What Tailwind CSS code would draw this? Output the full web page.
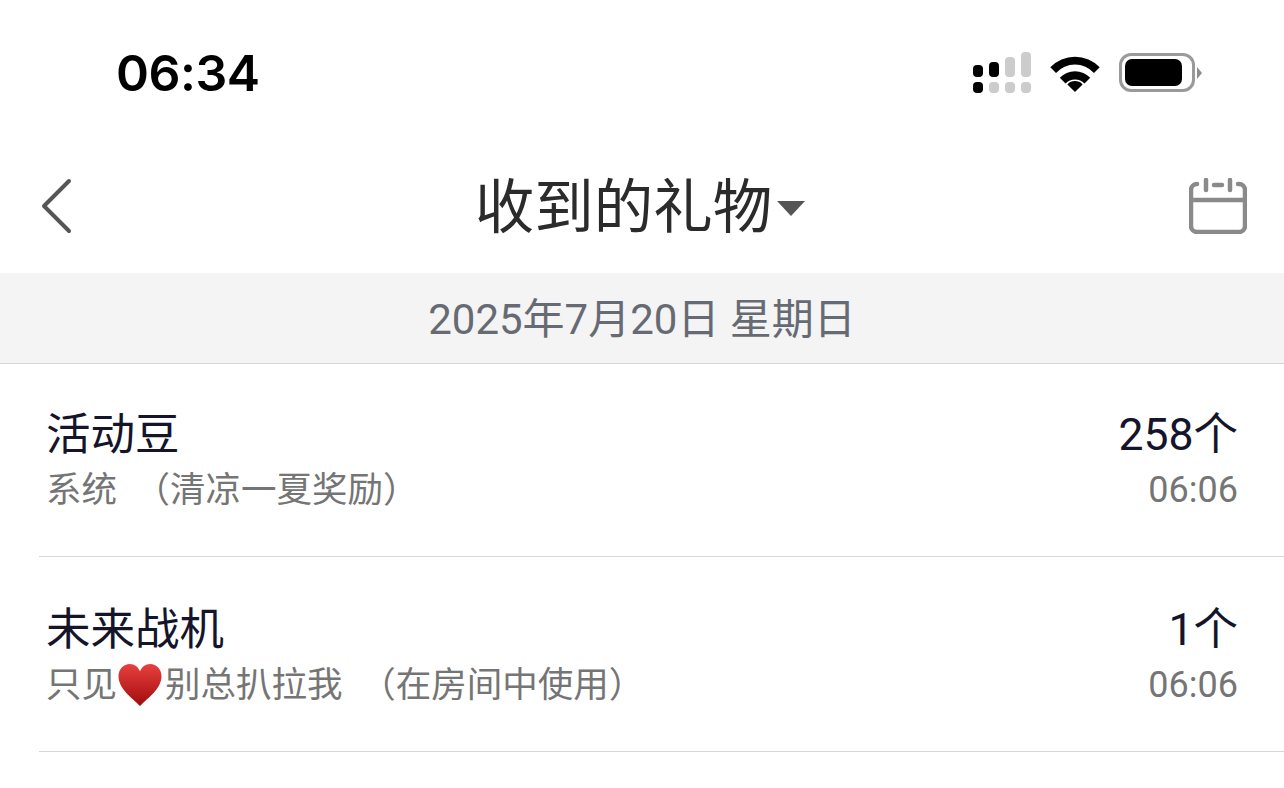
<!DOCTYPE html>
<html lang="zh">
<head>
  <meta charset="UTF-8" />
  <title>收到的礼物</title>
  <script src="https://cdn.jsdelivr.net/npm/@tailwindcss/browser@4"></script>
</head>
<body class="bg-white w-[1284px] h-[788px] overflow-hidden font-['Roboto','Noto_Sans_CJK_SC',sans-serif]">
  <!-- status bar -->
  <div class="h-[145px] flex items-start justify-between pl-[116px] pr-[82px] pt-[43px]">
    <span class="font-['Inter'] text-[50px] leading-[60px] font-semibold text-black tracking-[-0.5px]">06:34</span>
    <div class="flex items-start gap-[19px] pt-[9px]">
      <svg width="58" height="41" viewBox="0 0 58 41">
        <rect x="0" y="13" width="10" height="12" rx="4" fill="#000"/>
        <rect x="16" y="10" width="10" height="15" rx="4" fill="#000"/>
        <rect x="32" y="5" width="10" height="20" rx="4" fill="#ccc"/>
        <rect x="48" y="0" width="10" height="25" rx="4" fill="#ccc"/>
        <rect x="0" y="30" width="10" height="11" rx="4" fill="#000"/>
        <rect x="16" y="30" width="10" height="11" rx="4" fill="#ccc"/>
        <rect x="32" y="30" width="10" height="11" rx="4" fill="#ccc"/>
        <rect x="48" y="30" width="10" height="11" rx="4" fill="#ccc"/>
      </svg>
      <svg class="mt-[2px]" width="50" height="38" viewBox="0 0 52 40">
        <path d="M0 14 A36 36 0 0 1 52 14 L46 20 A27 27 0 0 0 6 20 Z" fill="#000"/>
        <path d="M10 25 A22 22 0 0 1 42 25 L36 31 A14 14 0 0 0 16 31 Z" fill="#000"/>
        <path d="M18 32 A11 11 0 0 1 34 32 L26 40 Z" fill="#000"/>
      </svg>
      <div class="flex items-center mt-[1px]">
        <div class="w-[76px] h-[39px] rounded-[12px] border-[3px] border-[#9a9a9a] p-[3px]">
          <div class="w-[57px] h-full rounded-[7px] bg-black"></div>
        </div>
        <div class="w-0 h-0 ml-[2px] border-l-[5px] border-y-[6px] border-l-[#8e8e8e] border-y-transparent"></div>
      </div>
    </div>
  </div>

  <!-- nav -->
  <div class="h-[128px] flex items-start justify-between pl-[41px] pr-[37px] pt-[33px]">
    <svg width="32" height="56" viewBox="0 0 32 56" fill="none" stroke="#555" stroke-width="4" stroke-linecap="round" stroke-linejoin="round">
      <path d="M28 3 L3 28 L28 53"/>
    </svg>
    <div class="flex items-center ml-[18px] -mt-[6px]">
      <span class="text-[59.5px] leading-[72px] text-[#2b2b2b]">收到的礼物</span>
      <span class="ml-[5px] w-0 h-0 border-l-[14px] border-r-[14px] border-t-[15px] border-l-transparent border-r-transparent border-t-[#555]"></span>
    </div>
    <svg width="58" height="56" viewBox="0 0 58 56" fill="none" stroke="#8a8a8a" stroke-width="4.5" stroke-linecap="round">
      <path d="M8 6 a6 6 0 0 0 -6 6 v36 a6 6 0 0 0 6 6 h42 a6 6 0 0 0 6 -6 v-36 a6 6 0 0 0 -6 -6 h-1"/>
      <path d="M2 22 H56"/>
      <path d="M17 2 V12 M41 2 V12 M25 7 H33"/>
    </svg>
  </div>

  <!-- date -->
  <div class="h-[91px] bg-[#f4f4f4] border-b border-[#d6d6d6] flex items-center justify-center pt-[3px]">
    <span class="text-[42px] leading-[52px] text-[#666b73]">2025年7月20日 星期日</span>
  </div>

  <!-- rows -->
  <div class="ml-[39px]">
    <div class="h-[193px] border-b border-[#d6d6d6] flex justify-between pl-[7px] pr-[46px] pt-[40px]">
      <div>
        <div class="text-[44.5px] leading-[62px] text-[#14142b]">活动豆</div>
        <div class="text-[35.5px] leading-[50px] -mt-[1px] text-[#757575] whitespace-pre">系统  （清凉一夏奖励）</div>
      </div>
      <div class="text-right">
        <div class="text-[44.5px] leading-[62px] text-[#14142b]">258个</div>
        <div class="text-[36px] leading-[50px] -mt-[1px] text-[#757575]">06:06</div>
      </div>
    </div>
    <div class="h-[195px] border-b border-[#d6d6d6] flex justify-between pl-[7px] pr-[46px] pt-[42px]">
      <div>
        <div class="text-[44.5px] leading-[62px] text-[#14142b]">未来战机</div>
        <div class="flex items-center text-[35.5px] leading-[50px] -mt-[1px] text-[#757575] whitespace-pre">只见<svg class="mr-[2px]" width="46" height="43" viewBox="0 0 44 42"><defs><linearGradient id="heart" x1="0" y1="0" x2="0" y2="1"><stop offset="0" stop-color="#e8403f"/><stop offset="1" stop-color="#a00c0c"/></linearGradient></defs><path d="M22 41 C14 33 1 24 1 12 C1 5 6 0 12 0 C17 0 20 3 22 7 C24 3 27 0 32 0 C38 0 43 5 43 12 C43 24 30 33 22 41 Z" fill="url(#heart)"/></svg>别总扒拉我  （在房间中使用）</div>
      </div>
      <div class="text-right">
        <div class="text-[44.5px] leading-[62px] text-[#14142b]">1个</div>
        <div class="text-[36px] leading-[50px] -mt-[1px] text-[#757575]">06:06</div>
      </div>
    </div>
  </div>
</body>
</html>
